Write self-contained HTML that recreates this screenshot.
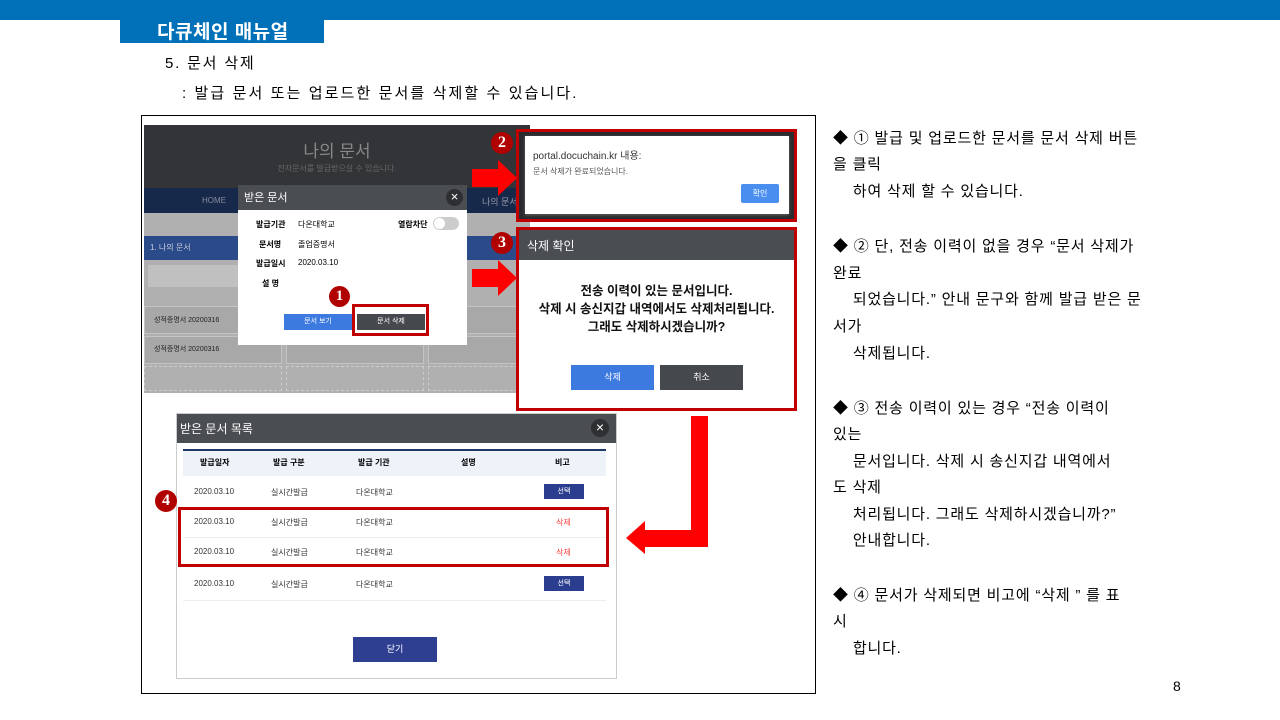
<!DOCTYPE html>
<html><head><meta charset="utf-8"><style>
*{margin:0;padding:0;box-sizing:border-box}
body{width:1280px;height:720px;position:relative;background:#fff;font-family:"Liberation Sans","Noto Sans CJK KR",sans-serif;overflow:hidden;color:#000}
.a{position:absolute}
.t{position:absolute;white-space:nowrap}
.r{font-size:15px;left:833px;letter-spacing:0.8px}
.c{text-align:center}
.card{position:absolute;width:138px;height:28px;background:#a8a8a8;border:1px solid #c4c4c4}
</style></head><body>
<div class="a" style="left:0;top:0;width:1280px;height:20px;background:#0070b9"></div>
<div class="a" style="left:120px;top:20px;width:204px;height:23px;background:#0070b9"></div>
<div class="t" style="left:157px;top:17px;font-size:19px;font-weight:bold;color:#fff;letter-spacing:0.5px">다큐체인 매뉴얼</div>
<div class="t" style="left:165px;top:52px;font-size:15px;letter-spacing:1.8px">5. 문서 삭제</div>
<div class="t" style="left:182px;top:82px;font-size:15px;letter-spacing:2.1px">: 발급 문서 또는 업로드한 문서를 삭제할 수 있습니다.</div>

<div class="a" style="left:141px;top:115px;width:675px;height:579px;border:1px solid #000"></div>

<!-- screenshot 1 -->
<div class="a" style="left:144px;top:125px;width:386px;height:268px;background:#b0b0b0;overflow:hidden">
 <div class="a" style="left:0;top:0;width:386px;height:63px;background:#333437"></div>
 <div class="t" style="left:0;width:386px;top:12px;font-size:17px;color:#888;text-align:center">나의 문서</div>
 <div class="t" style="left:0;width:386px;top:38px;font-size:8px;color:#666;text-align:center">전자문서를 발급받으실 수 있습니다.</div>
 <div class="a" style="left:0;top:63px;width:386px;height:25px;background:#16294a"></div>
 <div class="t" style="left:58px;top:71px;font-size:8px;color:#889">HOME</div>
 <div class="t" style="left:338px;top:70px;font-size:9px;color:#99a">나의 문서</div>
 <div class="a" style="left:0;top:111px;width:386px;height:24px;background:#2a4a8a"></div>
 <div class="t" style="left:6px;top:117px;font-size:8px;color:#ccd">1. 나의 문서</div>
 <div class="a" style="left:4px;top:140px;width:140px;height:22px;background:#c0c0c0"></div>
 <div class="card" style="left:0;top:181px"></div><div class="card" style="left:142px;top:181px"></div><div class="card" style="left:284px;top:181px"></div>
 <div class="t" style="left:10px;top:190px;font-size:7px;color:#222">성적증명서 20200316</div>
 <div class="t" style="left:290px;top:190px;font-size:7px;color:#222">20200316</div>
 <div class="card" style="left:0;top:211px"></div><div class="card" style="left:142px;top:211px"></div><div class="card" style="left:284px;top:211px"></div>
 <div class="t" style="left:10px;top:219px;font-size:7px;color:#222">성적증명서 20200316</div>
 <div class="a" style="left:0;top:241px;width:138px;height:25px;border:1px dashed #ccc"></div>
 <div class="a" style="left:142px;top:241px;width:138px;height:25px;border:1px dashed #ccc"></div>
 <div class="a" style="left:284px;top:241px;width:100px;height:25px;border:1px dashed #ccc"></div>
</div>
<div class="a" style="left:238px;top:185px;width:229px;height:160px;background:#fff"></div>
<div class="a" style="left:238px;top:185px;width:229px;height:25px;background:#4a4d52"></div>
<div class="t" style="left:244px;top:189px;font-size:11px;color:#fff">받은 문서</div>
<div class="a" style="left:446px;top:189px;width:17px;height:17px;border-radius:50%;background:#2e2f32;color:#fff;font-size:13px;text-align:center;line-height:16px">×</div>
<div class="t" style="left:256px;top:219px;font-size:8px;font-weight:bold">발급기관</div>
<div class="t" style="left:298px;top:219px;font-size:8px">다온대학교</div>
<div class="t" style="left:398px;top:219px;font-size:8px;font-weight:bold">열람차단</div>
<div class="a" style="left:433px;top:217px;width:26px;height:13px;border-radius:7px;background:#ccc"></div>
<div class="a" style="left:434px;top:218px;width:11px;height:11px;border-radius:50%;background:#fff"></div>
<div class="t" style="left:259px;top:239px;font-size:8px;font-weight:bold">문서명</div>
<div class="t" style="left:298px;top:239px;font-size:8px">졸업증명서</div>
<div class="t" style="left:256px;top:258px;font-size:8px;font-weight:bold">발급일시</div>
<div class="t" style="left:298px;top:258px;font-size:8px">2020.03.10</div>
<div class="t" style="left:262px;top:278px;font-size:8px;font-weight:bold">설 명</div>
<div class="a" style="left:284px;top:314px;width:68px;height:16px;background:#3d7ae0;color:#fff;font-size:7px;text-align:center;line-height:16px">문서 보기</div>
<div class="a" style="left:357px;top:314px;width:68px;height:16px;background:#45484d;color:#fff;font-size:7px;text-align:center;line-height:16px">문서 삭제</div>
<div class="a" style="left:352px;top:304px;width:77px;height:32px;border:3px solid #c00000"></div>
<div class="a" style="left:329px;top:286px;width:21px;height:21px;border-radius:50%;background:#b00000;color:#fff;font-weight:bold;font-size:15px;text-align:center;line-height:21px;font-family:'Liberation Serif',serif">1</div>

<!-- box 2 -->
<div class="a" style="left:516px;top:129px;width:281px;height:93px;border:3px solid #c00000;background:#2a2b2e"></div>
<div class="a" style="left:525px;top:136px;width:264px;height:78px;background:#fff;box-shadow:0 1px 3px #666"></div>
<div class="t" style="left:533px;top:147px;font-size:10px;color:#333">portal.docuchain.kr 내용:</div>
<div class="t" style="left:533px;top:166px;font-size:8px;color:#555">문서 삭제가 완료되었습니다.</div>
<div class="a" style="left:741px;top:184px;width:38px;height:19px;background:#4a8ef0;border-radius:2px;color:#fff;font-size:8px;text-align:center;line-height:19px">확인</div>
<div class="a" style="left:491px;top:132px;width:22px;height:22px;border-radius:50%;background:#b00000;color:#fff;font-weight:bold;font-size:16px;text-align:center;line-height:22px;font-family:'Liberation Serif',serif">2</div>
<svg class="a" style="left:472px;top:160px" width="46" height="36"><polygon points="0,9 26,9 26,0 45,18 26,36 26,27 0,27" fill="#f00"/></svg>

<!-- box 3 -->
<div class="a" style="left:516px;top:227px;width:281px;height:184px;border:3px solid #c00000;background:#fff"></div>
<div class="a" style="left:519px;top:230px;width:275px;height:30px;background:#4a4d52"></div>
<div class="t" style="left:527px;top:237px;font-size:12px;color:#fff">삭제 확인</div>
<div class="t c" style="left:519px;width:275px;top:282px;font-size:12.5px;font-weight:bold;line-height:18px;color:#111">전송 이력이 있는 문서입니다.<br>삭제 시 송신지갑 내역에서도 삭제처리됩니다.<br>그래도 삭제하시겠습니까?</div>
<div class="a" style="left:571px;top:365px;width:83px;height:25px;background:#3d7ae0;color:#fff;font-size:9px;text-align:center;line-height:25px">삭제</div>
<div class="a" style="left:660px;top:365px;width:83px;height:25px;background:#45484d;color:#fff;font-size:9px;text-align:center;line-height:25px">취소</div>
<div class="a" style="left:491px;top:232px;width:22px;height:22px;border-radius:50%;background:#b00000;color:#fff;font-weight:bold;font-size:16px;text-align:center;line-height:22px;font-family:'Liberation Serif',serif">3</div>
<svg class="a" style="left:472px;top:260px" width="46" height="36"><polygon points="0,9 26,9 26,0 45,18 26,36 26,27 0,27" fill="#f00"/></svg>

<!-- L arrow -->
<svg class="a" style="left:620px;top:414px" width="92" height="142"><polygon points="71,2 88,2 88,133 25,133 25,140 6,124 25,107 25,116 71,116" fill="#f00"/></svg>

<!-- screenshot 4 -->
<div class="a" style="left:176px;top:413px;width:441px;height:266px;border:1px solid #ccc;background:#fff"></div>
<div class="a" style="left:177px;top:414px;width:439px;height:29px;background:#4a4d52"></div>
<div class="t" style="left:180px;top:420px;font-size:12px;color:#fff">받은 문서 목록</div>
<div class="a" style="left:591px;top:419px;width:18px;height:18px;border-radius:50%;background:#2e2f32;color:#fff;font-size:14px;text-align:center;line-height:17px">×</div>
<div class="a" style="left:183px;top:449px;width:423px;height:27px;background:#eef2f9;border-top:2px solid #1f3a66"></div>
<div class="t" style="left:200px;top:457px;font-size:8px;font-weight:bold">발급일자</div>
<div class="t" style="left:273px;top:457px;font-size:8px;font-weight:bold">발급 구분</div>
<div class="t" style="left:358px;top:457px;font-size:8px;font-weight:bold">발급 기관</div>
<div class="t" style="left:461px;top:457px;font-size:8px;font-weight:bold">설명</div>
<div class="t" style="left:555px;top:457px;font-size:8px;font-weight:bold">비고</div>
<div class="t" style="left:194px;top:487px;font-size:8px;color:#333">2020.03.10</div><div class="t" style="left:271px;top:487px;font-size:8px;color:#333">실시간발급</div><div class="t" style="left:356px;top:487px;font-size:8px;color:#333">다온대학교</div>
<div class="a" style="left:544px;top:484px;width:40px;height:15px;background:#2b3d8f;color:#fff;font-size:7px;text-align:center;line-height:15px">선택</div>
<div class="t" style="left:194px;top:517px;font-size:8px;color:#333">2020.03.10</div><div class="t" style="left:271px;top:517px;font-size:8px;color:#333">실시간발급</div><div class="t" style="left:356px;top:517px;font-size:8px;color:#333">다온대학교</div><div class="t" style="left:556px;top:517px;font-size:8px;color:#f44">삭제</div>
<div class="a" style="left:183px;top:537px;width:423px;height:1px;background:#eee"></div>
<div class="t" style="left:194px;top:547px;font-size:8px;color:#333">2020.03.10</div><div class="t" style="left:271px;top:547px;font-size:8px;color:#333">실시간발급</div><div class="t" style="left:356px;top:547px;font-size:8px;color:#333">다온대학교</div><div class="t" style="left:556px;top:547px;font-size:8px;color:#f44">삭제</div>
<div class="t" style="left:194px;top:579px;font-size:8px;color:#333">2020.03.10</div><div class="t" style="left:271px;top:579px;font-size:8px;color:#333">실시간발급</div><div class="t" style="left:356px;top:579px;font-size:8px;color:#333">다온대학교</div>
<div class="a" style="left:544px;top:576px;width:40px;height:15px;background:#2b3d8f;color:#fff;font-size:7px;text-align:center;line-height:15px">선택</div>
<div class="a" style="left:183px;top:600px;width:423px;height:1px;background:#eee"></div>
<div class="a" style="left:353px;top:637px;width:84px;height:25px;background:#2e3f92;color:#fff;font-size:9px;text-align:center;line-height:25px">닫기</div>
<div class="a" style="left:178px;top:507px;width:431px;height:60px;border:3px solid #c00000"></div>
<div class="a" style="left:155px;top:490px;width:22px;height:22px;border-radius:50%;background:#b00000;color:#fff;font-weight:bold;font-size:16px;text-align:center;line-height:22px;font-family:'Liberation Serif',serif">4</div>

<!-- right text -->
<div class="t r" style="top:127px">◆ ① 발급 및 업로드한 문서를 문서 삭제 버튼</div>
<div class="t r" style="top:153px">을 클릭</div>
<div class="t r" style="top:180px">&nbsp;&nbsp;&nbsp;&nbsp;하여 삭제 할 수 있습니다.</div>
<div class="t r" style="top:235px">◆ ② 단, 전송 이력이 없을 경우 “문서 삭제가</div>
<div class="t r" style="top:262px">완료</div>
<div class="t r" style="top:288px">&nbsp;&nbsp;&nbsp;&nbsp;되었습니다.” 안내 문구와 함께 발급 받은 문</div>
<div class="t r" style="top:315px">서가</div>
<div class="t r" style="top:342px">&nbsp;&nbsp;&nbsp;&nbsp;삭제됩니다.</div>
<div class="t r" style="top:397px">◆ ③ 전송 이력이 있는 경우 “전송 이력이</div>
<div class="t r" style="top:423px">있는</div>
<div class="t r" style="top:450px">&nbsp;&nbsp;&nbsp;&nbsp;문서입니다. 삭제 시 송신지갑 내역에서</div>
<div class="t r" style="top:476px">도 삭제</div>
<div class="t r" style="top:503px">&nbsp;&nbsp;&nbsp;&nbsp;처리됩니다. 그래도 삭제하시겠습니까?”</div>
<div class="t r" style="top:529px">&nbsp;&nbsp;&nbsp;&nbsp;안내합니다.</div>
<div class="t r" style="top:584px">◆ ④ 문서가 삭제되면 비고에 “삭제 ” 를 표</div>
<div class="t r" style="top:610px">시</div>
<div class="t r" style="top:637px">&nbsp;&nbsp;&nbsp;&nbsp;합니다.</div>
<div class="t" style="left:1173px;top:678px;font-size:14px">8</div>
</body></html>
